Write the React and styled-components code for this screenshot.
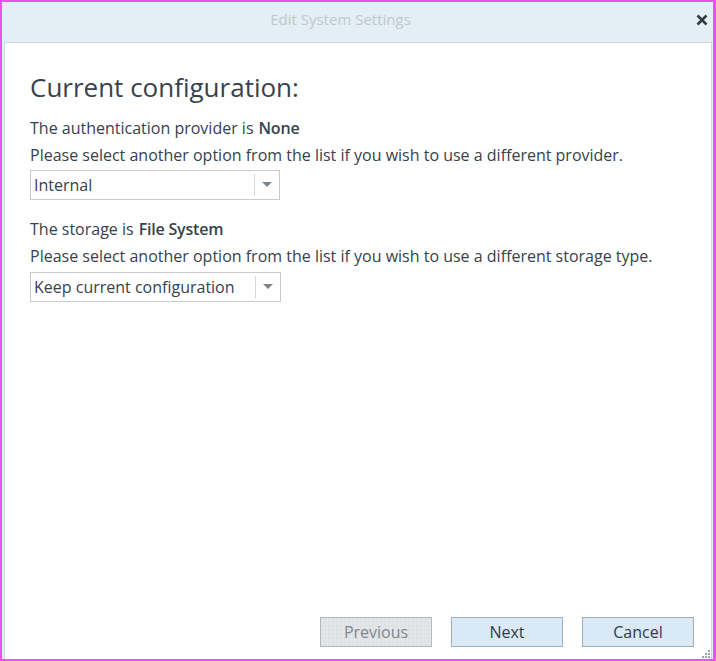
import React from "react";
import styled, { createGlobalStyle } from "styled-components";

const Global = createGlobalStyle`
  html, body { margin: 0; padding: 0; background: #fff; }
  * { box-sizing: border-box; }
`;

const Frame = styled.div`
  width: 716px;
  height: 661px;
  border: 2px solid #f050f0;
  border-right-width: 3px;
  background: #e3eef5;
  display: flex;
  flex-direction: column;
  font-family: "Open Sans", "Noto Sans", sans-serif;
  color: #333d47;
  position: relative;
`;

const TitleBar = styled.div`
  height: 40px;
  flex: none;
  display: flex;
  align-items: center;
  justify-content: center;
  position: relative;
`;

const Title = styled.div`
  font-size: 15px;
  color: #c3c7cb;
  margin-left: -34px;
  margin-top: -7px;
`;

const Close = styled.button`
  position: absolute;
  right: 4px;
  top: 11px;
  width: 14px;
  height: 14px;
  padding: 0;
  border: 0;
  background: transparent;
  display: flex;
  align-items: center;
  justify-content: center;
`;

const Panel = styled.div`
  flex: 1;
  background: #fff;
  border: 1px solid #cfd7dd;
  border-bottom: 0;
  margin: 0 1px 0 2px;
  display: flex;
  flex-direction: column;
  padding: 26px 17px 12px 25px;
  position: relative;
`;

const Heading = styled.h1`
  margin: 0 0 10px 0;
  font-size: 26px;
  font-weight: 400;
  line-height: 36px;
  color: #36424d;
`;

const Line = styled.div`
  font-size: 16px;
  line-height: 27px;
  color: #36424d;
`;

const Strong = styled.b`
  font-weight: 600;
  margin-left: 5px;
  letter-spacing: -0.2px;
`;

const Select = styled.div`
  width: ${(p) => p.$w}px;
  height: 30px;
  border: 1px solid #c6cbd0;
  display: flex;
  align-items: stretch;
  margin-top: ${(p) => p.$mt || 0}px;
  margin-bottom: ${(p) => p.$mb || 0}px;
  background: #fff;
`;

const SelectValue = styled.div`
  flex: 1;
  font-size: 16px;
  line-height: 28px;
  padding-left: 3px;
  color: #36424d;
`;

const SelectArrow = styled.div`
  width: 25px;
  border-left: 1px solid #d4d8dc;
  margin: 3px 0;
  display: flex;
  align-items: center;
  justify-content: center;
`;

const Spacer = styled.div`
  flex: 1;
`;

const Buttons = styled.div`
  display: flex;
  justify-content: flex-end;
  gap: 19px;
`;

const Button = styled.button`
  width: 112px;
  height: 30px;
  font-family: inherit;
  font-size: 16px;
  border: 1px solid ${(p) => (p.disabled ? "#b3b9bf" : "#a4aeb8")};
  background: ${(p) => (p.disabled ? "#dfe3e6" : "#d9e9f6")};
  color: ${(p) => (p.disabled ? "#7f868d" : "#333d47")};
  padding: 0;
  ${(p) =>
    p.disabled &&
    `background-image: radial-gradient(circle, #eef0f2 0.6px, transparent 0.8px); background-size: 4px 4px;`}
`;

const Grip = styled.svg`
  position: absolute;
  right: 1px;
  bottom: 1px;
`;

const Arrow = () => (
  <svg width="10" height="6" viewBox="0 0 10 6">
    <path d="M0 0 L10 0 L5 5 Z" fill="#7c848c" />
  </svg>
);

export default function App() {
  return (
    <>
      <Global />
      <Frame>
        <TitleBar>
          <Title>Edit System Settings</Title>
          <Close aria-label="close">
            <svg width="12" height="12" viewBox="0 0 12 12">
              <path d="M1.5 1.5 L10.5 10.5 M10.5 1.5 L1.5 10.5" stroke="#333d47" strokeWidth="2.6" />
            </svg>
          </Close>
        </TitleBar>
        <Panel>
          <Heading>Current configuration:</Heading>
          <Line>
            The authentication provider is<Strong>None</Strong>
          </Line>
          <Line>Please select another option from the list if you wish to use a different provider.</Line>
          <Select $w={250} $mt={1} $mb={16}>
            <SelectValue>Internal</SelectValue>
            <SelectArrow>
              <Arrow />
            </SelectArrow>
          </Select>
          <Line>
            The storage is<Strong>File System</Strong>
          </Line>
          <Line>Please select another option from the list if you wish to use a different storage type.</Line>
          <Select $w={251} $mt={2}>
            <SelectValue>Keep current configuration</SelectValue>
            <SelectArrow>
              <Arrow />
            </SelectArrow>
          </Select>
          <Spacer />
          <Buttons>
            <Button disabled>Previous</Button>
            <Button>Next</Button>
            <Button>Cancel</Button>
          </Buttons>
          <Grip width="8" height="8" viewBox="0 0 8 8">
            <rect x="6" y="0" width="2" height="2" fill="#9aa2aa" />
            <rect x="3" y="3" width="2" height="2" fill="#9aa2aa" />
            <rect x="6" y="3" width="2" height="2" fill="#9aa2aa" />
            <rect x="0" y="6" width="2" height="2" fill="#9aa2aa" />
            <rect x="3" y="6" width="2" height="2" fill="#9aa2aa" />
            <rect x="6" y="6" width="2" height="2" fill="#9aa2aa" />
          </Grip>
        </Panel>
      </Frame>
    </>
  );
}
